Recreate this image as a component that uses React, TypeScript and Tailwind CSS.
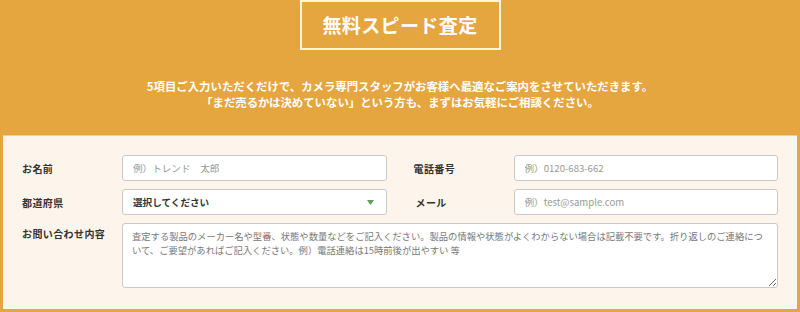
import React from "react";

const font = { fontFamily: '"Noto Sans CJK JP", "Noto Sans", sans-serif' };

function Label({ children, top }: { children: React.ReactNode; top?: boolean }) {
  return (
    <div
      className={`w-[100px] shrink-0 text-[10px] font-bold tracking-[0.04em] text-[#333] ${
        top ? "pt-[3px]" : "flex items-center"
      }`}
    >
      {children}
    </div>
  );
}

export default function App() {
  return (
    <div className="h-[312px] w-full overflow-hidden bg-[#e6a63f]" style={font}>
      <div className="flex flex-col items-center">
        <div className="flex h-[50px] w-[201px] items-center justify-center border-2 border-[#fff6e2] text-[19px] font-bold tracking-[0.02em] text-white">
          無料スピード査定
        </div>
        <div className="mt-[28px] text-center text-[11.4px] font-bold leading-[16px] text-white">
          <p>5項目ご入力いただくだけで、カメラ専門スタッフがお客様へ最適なご案内をさせていただきます。</p>
          <p>「まだ売るかは決めていない」という方も、まずはお気軽にご相談ください。</p>
        </div>
      </div>

      <div className="mx-[3px] mt-[25px] border-t border-[#f2cd92] bg-[#fdf5eb] px-[19px] pb-[21px] pt-[19px]">
        <div className="grid grid-cols-2 gap-x-[27px] gap-y-[8px]">
          <div className="flex h-[26px]">
            <Label>お名前</Label>
            <input
              className="h-full w-full rounded-[3px] border border-[#c9c9c9] bg-white px-[10px] text-[9.6px] text-[#333] outline-none placeholder:text-[#999]"
              placeholder="例）トレンド　太郎"
            />
          </div>
          <div className="flex h-[26px]">
            <Label>電話番号</Label>
            <input
              className="h-full w-full rounded-[3px] border border-[#c9c9c9] bg-white px-[10px] text-[9.6px] text-[#333] outline-none placeholder:text-[#999]"
              placeholder="例）0120-683-662"
            />
          </div>
          <div className="flex h-[26px]">
            <Label>都道府県</Label>
            <div className="relative flex h-full w-full items-center rounded-[3px] border border-[#c9c9c9] bg-white px-[10px] text-[9.6px] font-bold text-[#333]">
              選択してください
              <svg className="absolute right-[12px] top-[10px]" width="7" height="5" viewBox="0 0 7 5">
                <path d="M0 0h7L3.5 5z" fill="#5f9e5c" />
              </svg>
            </div>
          </div>
          <div className="flex h-[26px]">
            <Label>
              <span className="pl-[2px]">メール</span>
            </Label>
            <input
              className="h-full w-full rounded-[3px] border border-[#c9c9c9] bg-white px-[10px] text-[9.6px] text-[#333] outline-none placeholder:text-[#999]"
              placeholder="例）test@sample.com"
            />
          </div>
          <div className="col-span-2 flex h-[65px]">
            <Label top>お問い合わせ内容</Label>
            <textarea
              className="h-full w-full rounded-[3px] border border-[#c9c9c9] bg-white px-[9px] pb-[4px] pt-[5px] text-[9.3px] leading-[14px] text-[#333] outline-none placeholder:text-[#777]"
              placeholder="査定する製品のメーカー名や型番、状態や数量などをご記入ください。製品の情報や状態がよくわからない場合は記載不要です。折り返しのご連絡について、ご要望があればご記入ください。例）電話連絡は15時前後が出やすい 等"
            />
          </div>
        </div>
      </div>
    </div>
  );
}
